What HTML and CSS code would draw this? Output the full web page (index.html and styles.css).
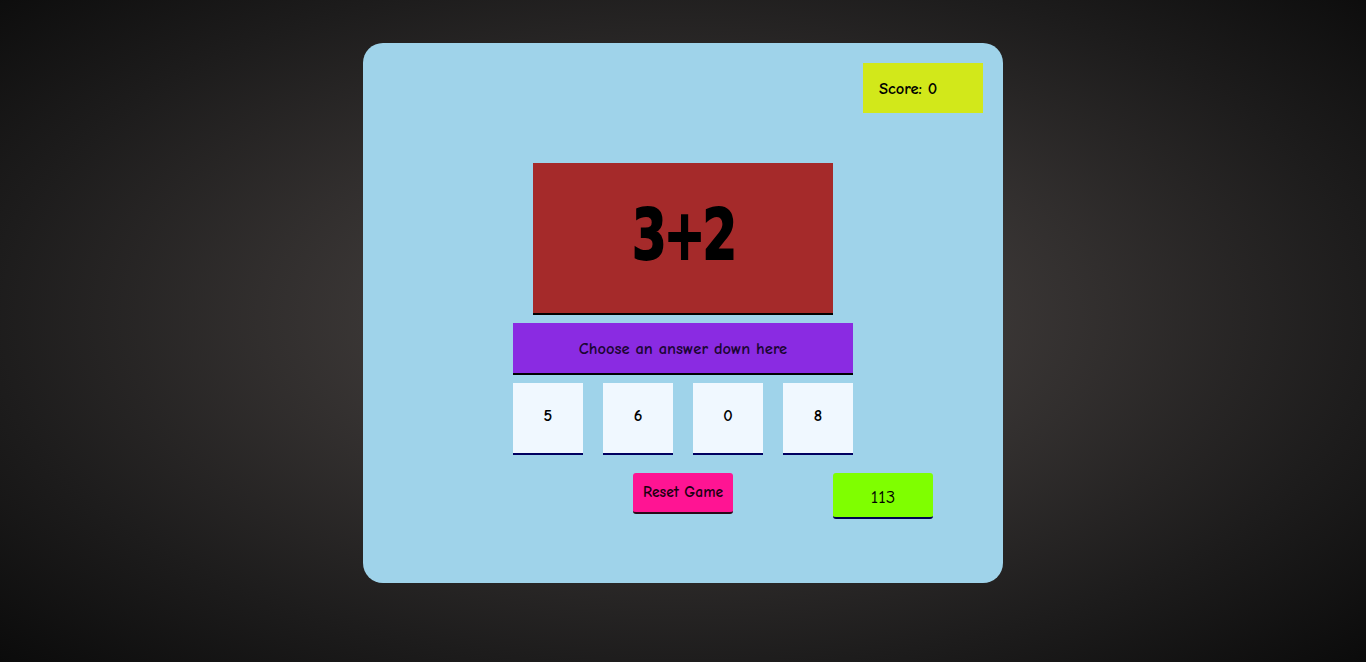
FILE: index.html
```html
<!DOCTYPE html>
<html lang="en">
<head>
<meta charset="utf-8">
<title>Math Game</title>
<link rel="stylesheet" href="styles.css">
</head>
<body>
  <main class="card">
    <div class="top">
      <div class="score">Score: 0</div>
    </div>
    <div class="question"><span class="expr">3+2</span></div>
    <div class="instruction">Choose an answer down here</div>
    <div class="answers">
      <div class="answer">5</div>
      <div class="answer">6</div>
      <div class="answer">0</div>
      <div class="answer">8</div>
    </div>
    <div class="controls">
      <button class="reset">Reset Game</button>
      <div class="timer">113</div>
    </div>
  </main>
</body>
</html>
```
FILE: styles.css
```css
html, body {
  margin: 0;
  height: 100%;
}
body {
  background: radial-gradient(ellipse at 50% 48%, #4a4543 0%, #3b3736 30%, #1d1c1c 72%, #0b0b0b 100%);
  display: flex;
  justify-content: center;
  align-items: flex-start;
  padding-top: 43px;
  box-sizing: border-box;
  font-family: "Comic Sans MS", "Comic Neue", "Open Sans", sans-serif;
  font-weight: 700;
  color: #000;
}
.card {
  width: 640px;
  height: 540px;
  box-sizing: border-box;
  padding: 20px;
  background: #9fd3ea;
  border-radius: 20px;
  display: flex;
  flex-direction: column;
}
.top {
  display: flex;
  justify-content: flex-end;
}
.score {
  width: 120px;
  height: 50px;
  box-sizing: border-box;
  padding-left: 16px;
  background: #d2e81a;
  display: flex;
  align-items: center;
  font-size: 16.5px;
}
.question {
  width: 300px;
  height: 150px;
  margin: 50px auto 0;
  background: #a52a2a;
  border-bottom: 2px solid #000;
  display: flex;
  align-items: center;
  justify-content: center;
  overflow: hidden;
}
.expr {
  display: inline-block;
  font-family: "DejaVu Sans", sans-serif;
  font-weight: bold;
  font-size: 70px;
  line-height: 1;
  letter-spacing: -4px;
  -webkit-text-stroke: 2px #000;
  transform: scaleX(0.71);
  margin-bottom: 6px;
}
.instruction {
  width: 340px;
  height: 50px;
  margin: 8px auto 0;
  background: #8a2be2;
  border-bottom: 2px solid #000;
  display: flex;
  align-items: center;
  justify-content: center;
  font-size: 16.5px;
  color: #1b0633;
}
.answers {
  display: flex;
  gap: 20px;
  margin: 8px auto 0;
}
.answer {
  width: 70px;
  height: 64px;
  padding-bottom: 6px;
  background: #f0f8ff;
  border-bottom: 2px solid #000060;
  display: flex;
  align-items: center;
  justify-content: center;
  font-size: 16.5px;
}
.controls {
  display: grid;
  grid-template-columns: 1fr 100px 1fr;
  align-items: start;
  margin-top: 18px;
}
.reset {
  grid-column: 2;
  width: 100px;
  height: 41px;
  box-sizing: border-box;
  margin: 0;
  padding: 0 0 2px;
  background: #ff1493;
  border: none;
  border-bottom: 2px solid #2a0818;
  border-radius: 3px;
  font-family: inherit;
  font-weight: 700;
  font-size: 15.5px;
  color: #1a0010;
}
.timer {
  grid-column: 3;
  width: 100px;
  height: 46px;
  margin-left: 100px;
  box-sizing: border-box;
  padding-top: 3px;
  background: #7fff00;
  border-bottom: 2px solid #000050;
  border-radius: 3px;
  display: flex;
  align-items: center;
  justify-content: center;
  font-size: 19px;
  font-weight: 400;
}
```
